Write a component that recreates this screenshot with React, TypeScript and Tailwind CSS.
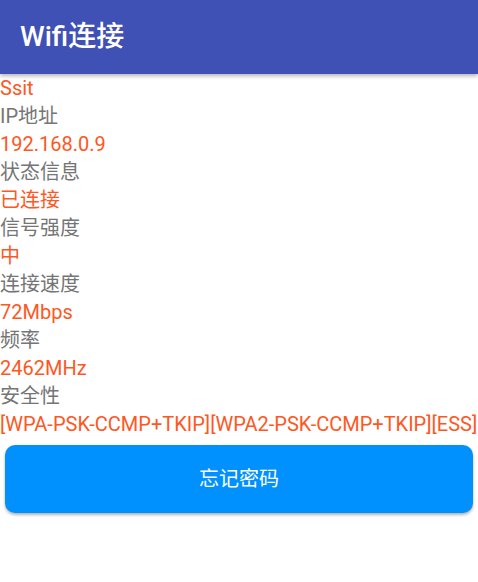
const rows: { label: string; value?: boolean }[] = [
  { label: "Ssit", value: true },
  { label: "IP地址" },
  { label: "192.168.0.9", value: true },
  { label: "状态信息" },
  { label: "已连接", value: true },
  { label: "信号强度" },
  { label: "中", value: true },
  { label: "连接速度" },
  { label: "72Mbps", value: true },
  { label: "频率" },
  { label: "2462MHz", value: true },
  { label: "安全性" },
  { label: "[WPA-PSK-CCMP+TKIP][WPA2-PSK-CCMP+TKIP][ESS]", value: true },
];

export default function App() {
  return (
    <div className="h-[582px] w-[478px] overflow-hidden bg-white font-['Roboto','Noto_Sans_CJK_SC',sans-serif]">
      <div className="relative z-10 flex h-[74px] items-center bg-[#3f51b5] px-5 shadow-[0_2px_4px_rgba(0,0,0,0.3)]">
        <span className="text-[28px] font-medium text-white">Wifi连接</span>
      </div>
      <div className="flex flex-col">
        {rows.map((r, i) => (
          <div
            key={i}
            className={`h-[28px] whitespace-nowrap text-[20px] leading-[28px] ${r.value ? "text-[#ff5722]" : "text-[#757575]"}`}
          >
            {r.label}
          </div>
        ))}
      </div>
      <div className="px-[5px] pt-[7px]">
        <button className="flex h-[68px] w-full items-center justify-center rounded-[10px] bg-[#0091ff] text-[20px] text-white shadow-[0_2px_3px_rgba(0,0,0,0.3)]">
          忘记密码
        </button>
      </div>
    </div>
  );
}
